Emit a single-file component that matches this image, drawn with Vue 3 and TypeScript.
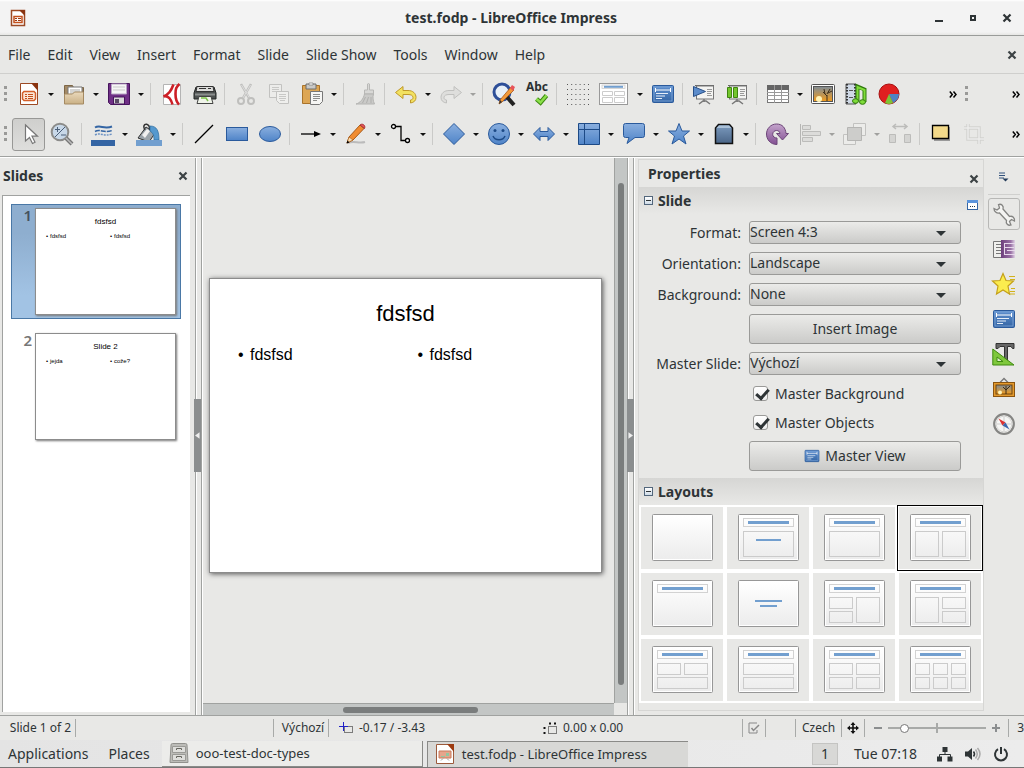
<script setup lang="ts">
import { ref } from 'vue'

interface Tool {
  icon?: string
  label?: string
  menu?: boolean
  disabled?: boolean
  active?: boolean
  wide?: string
}

const sep: Tool = {}

const menus = ['File', 'Edit', 'View', 'Insert', 'Format', 'Slide', 'Slide Show', 'Tools', 'Window', 'Help']

const standardTools: Tool[] = [
  { icon: 'newDoc', label: 'New', menu: true },
  { icon: 'open', label: 'Open', menu: true },
  { icon: 'save', label: 'Save', menu: true },
  sep,
  { icon: 'pdf', label: 'Export as PDF' },
  { icon: 'print', label: 'Print' },
  sep,
  { icon: 'cut', label: 'Cut', disabled: true },
  { icon: 'copy', label: 'Copy', disabled: true },
  { icon: 'paste', label: 'Paste', menu: true },
  sep,
  { icon: 'brush', label: 'Clone formatting', disabled: true },
  sep,
  { icon: 'undo', label: 'Undo', menu: true },
  { icon: 'redo', label: 'Redo', menu: true, disabled: true },
  sep,
  { icon: 'find', label: 'Find and replace' },
  { icon: 'spell', label: 'Spelling' },
  sep,
  { icon: 'grid', label: 'Display grid' },
  { icon: 'layout', label: 'Slide layout', menu: true, wide: 'wide-lg' },
  { icon: 'master', label: 'Master slide' },
  sep,
  { icon: 'present', label: 'Start from first slide' },
  { icon: 'presentHere', label: 'Start from current slide' },
  sep,
  { icon: 'table', label: 'Table', menu: true },
  { icon: 'image', label: 'Image' },
  { icon: 'media', label: 'Audio or video' },
  { icon: 'chart', label: 'Chart' }
]

const drawingTools: Tool[] = [
  { icon: 'pointer', label: 'Select', active: true },
  { icon: 'zoom', label: 'Zoom' },
  sep,
  { icon: 'lineColor', label: 'Line color', menu: true },
  { icon: 'fillColor', label: 'Fill color', menu: true, wide: 'wide-sm' },
  sep,
  { icon: 'line', label: 'Line' },
  { icon: 'rect', label: 'Rectangle' },
  { icon: 'ellipse', label: 'Ellipse' },
  sep,
  { icon: 'arrow', label: 'Lines and arrows', menu: true },
  { icon: 'pencil', label: 'Curve', menu: true },
  { icon: 'connector', label: 'Connector', menu: true },
  sep,
  { icon: 'diamond', label: 'Basic shapes', menu: true },
  { icon: 'smiley', label: 'Symbol shapes', menu: true },
  { icon: 'blockArrow', label: 'Block arrows', menu: true },
  { icon: 'flow', label: 'Flowchart', menu: true },
  { icon: 'callout', label: 'Callouts', menu: true },
  { icon: 'star', label: 'Stars', menu: true },
  { icon: 'cube', label: '3D objects', menu: true },
  sep,
  { icon: 'rotate', label: 'Rotate' },
  { icon: 'align', label: 'Align', menu: true, disabled: true },
  { icon: 'arrange', label: 'Arrange', menu: true, disabled: true },
  { icon: 'distribute', label: 'Distribute', disabled: true },
  sep,
  { icon: 'shadow', label: 'Shadow' },
  { icon: 'crop', label: 'Crop', disabled: true }
]

const docShape =
  '<path d="M3.500 1.500h17v21h-17z" fill="#fff" stroke="#9c4a24"/><path d="M14 1h7v8z" fill="#8a3410"/>'
const masterShape =
  '<rect x="1.500" y="3.500" width="21" height="17" rx="1" fill="url(#gDeep)" stroke="#2a5a9c"/><rect x="3" y="5" width="18" height="14" fill="none" stroke="#7fa8da" stroke-width=".8"/><path d="M4.500 6v4M19.500 6v4M4.500 8h15" stroke="#fff" fill="none"/><path d="M5 11.500h12M5 14h9M5 16.500h6" stroke="#e6eef8" fill="none"/>'
const screenShape =
  '<path d="M3 3.500h19" stroke="#666"/><rect x="4.500" y="4" width="17" height="13" fill="#f4f4f2" stroke="#777"/><path d="M15 7.500h5M15 9.500h5M15 11.500h4M15 13.500h5" stroke="#999"/><path d="M12 17v3M7 22l4-3h3l4 3" fill="none" stroke="#777" stroke-width="1.500"/>'

const icons: Record<string, string> = {
  newDoc: docShape + '<path d="M7 9.500h10l1.500 1.500v6L17 18.500H7L5.500 17v-6z" fill="#fbe6d6" stroke="#d4602a" stroke-width="1.500"/><path d="M8 12.500h2M11 12.500h5M8 14.500h2M11 14.500h5M8 16.500h2M11 16.500h5" stroke="#c4501c"/>',
  open: '<path d="M2.500 21V3.500h8l1 2h10V21z" fill="#a48a66" stroke="#7d6645"/><path d="M6 5h14v9H6z" fill="#fff" stroke="#777"/><path d="M8 7h10v5H8z" fill="#d4d4d2"/><path d="M2.500 12h8l2-2h9v12h-19z" fill="url(#gFolder)" stroke="#a58a62"/>',
  save: '<path d="M1.500 1.500h21v21h-19l-2-2z" fill="#6f2f86" stroke="#46145c"/><path d="M4.500 2h15v10h-15z" fill="#f6f6f6" stroke="#b9a5c4"/><path d="M6 5h12M6 8h12" stroke="#c9c9c9"/><path d="M6.500 15h11v7h-11z" fill="#d8d8d8" stroke="#46145c"/><path d="M8 17h4v4H8z" fill="#5a4a66"/>',
  pdf: '<path d="M3.500 2.500h17v20h-17z" fill="#fff" stroke="#b4b4b4"/><path d="M19.500 2C16 5 15.500 7 15.500 12s1 8 3.500 10.500" fill="none" stroke="#cc1f26" stroke-width="2.600"/><path d="M13.500 2.500C11 9 9 12 3.500 14.500c4-1 7 1 9 8" fill="none" stroke="#cc1f26" stroke-width="2.600"/>',
  print: '<path d="M3 5h18l2 6v6H1v-6z" fill="#4d5150" stroke="#232625"/><path d="M4 4.500h16l1 5H3z" fill="#dcdcda" stroke="#333"/><path d="M6 6.500h7M15 6.500h3" stroke="#333"/><path d="M2 12.500h20" stroke="#8b8e8d" stroke-width="2"/><path d="M6 14.500h12l2 7H4z" fill="#f0f4ea" stroke="#444"/><path d="M8 16h5l2 3" stroke="#7cc24a" stroke-width="1.500" fill="none"/>',
  cut: '<path d="M7 2l8 14M17 2L9 16" stroke="#bfbfbd" stroke-width="2.500"/><path d="M7.500 3l8 13M16.500 3L9 16" stroke="#dedede"/><circle cx="7" cy="19" r="3" fill="none" stroke="#bfbfbd" stroke-width="2"/><circle cx="17" cy="19" r="3" fill="none" stroke="#bfbfbd" stroke-width="2"/>',
  copy: '<path d="M2.500 2.500h12v13h-12z" fill="#ececea" stroke="#c2c2c0"/><path d="M5 5.500h7M5 7.500h7M5 9.500h5" stroke="#c8c8c6"/><path d="M9.500 9.500h12v12h-9l-3-3z" fill="#efefed" stroke="#c2c2c0"/><path d="M12 12.500h7M12 14.500h7M12 16.500h7M13 18.500h5" stroke="#c8c8c6"/>',
  paste: '<path d="M2.500 3.500h17v18h-17z" fill="#dda654" stroke="#a9732a"/><path d="M6 2h10v5H6z" fill="#c9c9c7" stroke="#6f6f6d"/><path d="M9 1h4v2H9z" fill="#fff" stroke="#777" stroke-width=".7"/><path d="M10.500 9.500h12v10l-3 3h-9z" fill="#f6f6f4" stroke="#777"/><path d="M13 12.500h7M13 14.500h7M13 16.500h7M13 18.500h4" stroke="#8c8c8a"/>',
  brush: '<path d="M14.500 2q1-1 2 0v6h4v4h-9V8h3z" fill="#d8d8d6" stroke="#b8b8b6"/><path d="M11.500 12h9c-1 3-.5 7 1 10H3c4-1 7.500-5 8.500-10z" fill="#cacac8" stroke="#b4b4b2"/><path d="M12.500 15l-3 6M15.500 15l-2 6M18 15v6" stroke="#b0b0ae"/>',
  undo: '<path d="M9 4.500v4h5c5 0 8 3 8 7 0 3-2 5-5.500 5.500v-3c2-.5 2.500-1 2.500-2.500 0-2-2-3-5-3H9v4L1.500 10.500z" fill="#f2e160" stroke="#c0992a"/>',
  redo: '<path d="M15 4.500v4h-5c-5 0-8 3-8 7 0 3 2 5 5.500 5.500v-3C5.500 17.500 5 17 5 15.500c0-2 2-3 5-3h5v4l7.500-6z" fill="#dededc" stroke="#c0c0be"/>',
  find: '<circle cx="10" cy="10" r="8" fill="#e8f0f8" stroke="#2e4f98" stroke-width="3"/><path d="M15 15l7 8" stroke="#222" stroke-width="4"/><path d="M7 22l1-4L19 5l3 3-12 12z" fill="#f39a3a" stroke="#a85a18" stroke-width=".8"/><path d="M18 6l2-3 3 2-2 4z" fill="#e8545a"/><path d="M7 22l1-4 2 2z" fill="#333"/>',
  spell: '<text x="12" y="9" text-anchor="middle" font-family="Noto Sans, sans-serif" font-size="12" font-weight="700" fill="#2b3133">Abc</text><path d="M11.500 17l4 3.500 6-7" fill="none" stroke="#3d8a10" stroke-width="4.500"/><path d="M11.500 17l4 3.500 6-7" fill="none" stroke="#8be04a" stroke-width="2.500"/>',
  grid: [0, 1, 2, 3, 4].map(r => `<path d="M1 ${2.5 + r * 5}h22" stroke="#555" stroke-dasharray="1 3.200"/>`).join(''),
  layout: '<rect x="-2.500" y="1.500" width="28" height="21" fill="#fff" stroke="#999"/><rect x="0" y="3" width="23" height="3.500" fill="#f8f8f8" stroke="#ccc" stroke-width=".8"/><path d="M2 4.800h19" stroke="#729fcf" stroke-width="2"/><path d="M.5 9.500h10v4H.5zM12.500 9.500h10v4h-10zM.5 15.500h10v5H.5zM12.500 15.500h10v5h-10z" fill="none" stroke="#ccc"/>',
  master: masterShape,
  present: screenShape + '<path d="M1.500 4.500v10l12-5z" fill="#5c8ccb" stroke="#274f87"/>',
  presentHere: screenShape + '<path d="M2.500 5.500h4v10h-4zM8.500 5.500h4v10h-4z" fill="#73c62c" stroke="#3f8410"/>',
  table: '<rect x="1.500" y="3.500" width="21" height="17" fill="#fff" stroke="#777"/><path d="M1 3h22v5H1z" fill="#666"/><path d="M1 10.500h22M1 13.500h22M1 17.500h22M8.500 3v18M15.500 3v18" stroke="#999" fill="none"/>',
  image: '<rect x=".5" y="2.500" width="23" height="19" rx="1" fill="#fff" stroke="#555"/><rect x="2.500" y="4.500" width="19" height="15" fill="url(#gSun)" stroke="#555"/><circle cx="8" cy="17" r="3" fill="#fff3b8"/><path d="M16 19v-6M16 14l-4-4M16 12l3-5M14 12l-1-5M17 11l4-2" stroke="#3b2c1a" fill="none"/>',
  media: '<path d="M2 2h10v20H2z" fill="#cfd9e6" stroke="#555"/><path d="M3 2v20M11 2v20" stroke="#333" stroke-width="2" stroke-dasharray="1.500 1.500"/><path d="M5 8.500h4M5 15.500h4" stroke="#555"/><path d="M13.500 19V4.500l7 3V20" fill="none" stroke="#2f7a0c" stroke-width="4"/><path d="M13.500 19V5l7 3v12" fill="none" stroke="#7fdc3a" stroke-width="2"/><ellipse cx="11.500" cy="19" rx="3" ry="2.300" fill="#7fdc3a" stroke="#2f7a0c"/><ellipse cx="18.500" cy="20" rx="3" ry="2.300" fill="#7fdc3a" stroke="#2f7a0c"/>',
  chart: '<circle cx="12" cy="12" r="10" fill="#e02020" stroke="#a80f0f"/><path d="M12 12h10a10 10 0 0 1-6 9z" fill="#4f83c4"/><path d="M12 12l-4 9c2.500 1.200 5.500 1.200 8 0z" fill="#7fc436"/>',
  pointer: '<path d="M8.500 3v16l4-3.500 3 6 2.500-1.300-3-6h5.500z" fill="#fff" stroke="#777" stroke-width="1.200"/>',
  zoom: '<circle cx="10" cy="10" r="8.300" fill="#c8d8e8" stroke="#8c8c8a" stroke-width="2"/><path d="M16 16l6 6" stroke="#777" stroke-width="4"/><path d="M16 16l6 6" stroke="#bbb" stroke-width="1.500"/><path d="M5 15L15 5M5 7.500h5M7.500 5v5M11 13h5" stroke="#4b5f78" fill="none"/>',
  lineColor: '<path d="M4 5.500c5-3 9 2 17-1" stroke="#3465a4" stroke-width="2" fill="none"/><path d="M4 9.500c5-3 9 2 17-1" stroke="#3465a4" stroke-width="1.500" stroke-dasharray="5 1" fill="none"/><path d="M4 13c5-3 9 2 17-1" stroke="#6d93c4" stroke-dasharray="2 1" fill="none" stroke-width="1.500"/><rect x="0" y="18" width="24" height="6" fill="#3465a4"/>',
  fillColor: '<path d="M1 16L9 5l9 6-6 9z" fill="#9aa3aa" stroke="#333"/><path d="M5 13l5-6 3 2-5 7z" fill="#f0f0f0"/><path d="M8 8c-3-5 1-8 4-4l1 4" fill="none" stroke="#333" stroke-width="1.500"/><path d="M13 4c7 0 9 5 9 14h-5c0-5-1-7-4-9z" fill="#5599cf" stroke="#2a6a9e" stroke-width=".7"/><rect x="-1" y="18" width="26" height="6" fill="#729fcf"/>',
  line: '<path d="M3 21L21 3" stroke="#000" stroke-width="1.200"/>',
  rect: '<rect x="1.500" y="5.500" width="21" height="13" fill="url(#gBlue)" stroke="#2a5a9c"/>',
  ellipse: '<ellipse cx="12" cy="12" rx="10.500" ry="7.500" fill="url(#gBlue)" stroke="#2a5a9c"/>',
  arrow: '<path d="M2 12h14" stroke="#000" stroke-width="1.300"/><path d="M15 9l7 3-7 3z"/>',
  pencil: '<path d="M4 21c6-3 10 1 17-1" stroke="#bbb" stroke-width="2" fill="none"/><path d="M3 21l2-6L16 3l4 3.500L9 18z" fill="#f08c30" stroke="#a85a18"/><path d="M16 3c2-2 6 0 4.500 3.500z" fill="#e8545a" stroke="#a33"/><path d="M3 21l2-6 4 3z" fill="#f8dcae" stroke="#a85a18" stroke-width=".6"/><path d="M2.500 21.500l1-3 2 2z"/>',
  connector: '<path d="M6 4.500h6v14h5" fill="none" stroke="#000" stroke-width="1.300"/><circle cx="4.500" cy="4.500" r="2" fill="#fff" stroke="#000" stroke-width="1.300"/><circle cx="18.500" cy="18.500" r="2" fill="#fff" stroke="#000" stroke-width="1.300"/>',
  diamond: '<path d="M12 1.500L22.500 12 12 22.500 1.500 12z" fill="url(#gBlue)" stroke="#2a5a9c"/>',
  smiley: '<circle cx="12" cy="12" r="10.500" fill="url(#gBlue)" stroke="#2a5a9c"/><circle cx="8" cy="8.500" r="1.500" fill="#1d4a86"/><circle cx="16" cy="8.500" r="1.500" fill="#1d4a86"/><path d="M6 14c2 5 10 5 12 0" fill="none" stroke="#1d4a86" stroke-width="1.500"/>',
  blockArrow: '<path d="M1.500 12l6.500-6.500v4h8v-4l6.500 6.500-6.500 6.500v-4H8v4z" fill="url(#gBlue)" stroke="#2a5a9c"/>',
  flow: '<path d="M1.500 1.500h21v21h-21z" fill="url(#gBlue)" stroke="#1d4a86"/><path d="M7.500 2v20M2 7.500h20" stroke="#1d4a86"/>',
  callout: '<path d="M3.500 1.500h17q2 0 2 2v10q0 2-2 2H13l-8 6 2-6H3.500q-2 0-2-2v-10q0-2 2-2z" fill="url(#gBlue)" stroke="#2a5a9c"/>',
  star: '<path d="M12 1.500l3 7.500h7.500l-6 5 2.500 8-7-5-7 5 2.500-8-6-5H9z" fill="url(#gBlue)" stroke="#2a5a9c"/>',
  cube: '<path d="M3.500 6l3-3.500h11l3 3.500v15.500h-17z" fill="url(#gSteel)" stroke="#111" stroke-width="1.500"/><path d="M4.500 6l2.500-2.500h10L19.500 6z" fill="#a9c0d8"/>',
  rotate: '<path d="M12 22.500C5 22.500 1.500 17 1.500 12S5.500 2 11.500 2s9 4 9.500 9.500h2.500L17.500 18l-6-6.500h3.500c-.5-2-1.500-3-3.500-3s-3.800 1.500-3.800 3.800S9.500 16 12 16z" fill="url(#gRotate)" stroke="#6c4578"/>',
  align: '<path d="M2.500 2v21" stroke="#b5b5b3"/><path d="M4.500 3.500h8v4h-8zM4.500 9.500h18v4h-18zM4.500 15.500h10v4h-10z" fill="#dcdcda" stroke="#bcbcba"/>',
  arrange: '<path d="M10.500 1.500h12v12h-12zM.5 12.500h12v10H.5z" fill="#ececea" stroke="#c2c2c0"/><path d="M4.500 5.500h14v13h-14z" fill="#cdcdcb" stroke="#b5b5b3"/>',
  distribute: '<path d="M5 4.500h14M8 2L5 4.500 8 7M16 2l3 2.500L16 7" fill="none" stroke="#bcbcba" stroke-width="1.500"/><path d="M1.500 12.500h6v8h-6zM16.500 12.500h6v8h-6z" fill="#d4d4d2" stroke="#bcbcba"/>',
  shadow: '<path d="M5 5h16v14H5z" fill="#999"/><path d="M3.500 3.500h16v13h-16z" fill="#f2d98a" stroke="#000" stroke-width="1.300"/>',
  crop: '<path d="M6 2v15h16M2 6h15v16" fill="none" stroke="#d2d2d0" stroke-width="3.500"/><path d="M6 2v15h16M2 6h15v16" fill="none" stroke="#ececea" stroke-width="1.500"/>',
  wrench: '<path d="M2 6.500l3 1.500 2.500-2L6.500 2.500c3-1 5.500 1.500 4.500 4.500l6.500 7.500c3-1 5.500 1.500 5 4.500l-3-1.500-2 2L19 23c-3 1-5.500-1.500-4.500-4.500L7.500 11C4.500 11.500 2 9.500 2 6.500z" fill="#f4f4f2" stroke="#848482" stroke-width="1.300"/>',
  transition: '<path d="M1.500 4.500h9v16h-9z" fill="#efefed" stroke="#777"/><path d="M4 7.500h5M4 10.500h5M4 13.500h5M4 16.500h5" stroke="#777"/><path d="M9 3h14v18H9z" fill="url(#gPurple)"/><path d="M12 6.500h11M13 10.500h9M15 13.500h8M12 17.500h11M12.500 6v12" stroke="#e8d8ec" fill="none"/>',
  animation: '<path d="M17 4.500h6M18 7.500h5M19 16.500h4M18 19.500h5M17 22h6" stroke="#d2b21c"/><path d="M11 1.500l3 7 7.500.5-5.500 5 1.500 8-6.500-4-6.500 4 1.500-8L.5 9 8 8.500z" fill="#fbec4e" stroke="#c4a01a" stroke-width="1.200"/>',
  styles: '<path d="M4 1.500h18v5h-1.500L19 4.500h-3.500V19l2 2h-7l2-2V4.500H8L6 6.500H4z" fill="#666" stroke="#333"/><path d="M.8 7v16H22z" fill="#7fc83c" stroke="#3f8a10"/><path d="M5 15v4.500h6z" fill="#dff0cc" stroke="#3f8a10"/>',
  gallery: '<path d="M8 5.500l4-4 4 4" fill="none" stroke="#777" stroke-width="1.300"/><rect x="1.500" y="5.500" width="21" height="14" fill="#e49a2c" stroke="#8a5410"/><rect x="4" y="8" width="16" height="9" fill="url(#gSun)" stroke="#6b4414"/><circle cx="8" cy="15.500" r="2" fill="#fff3b8"/><path d="M14 17v-4l-3-3M14 13l4-4M14 12V9" stroke="#3b2c1a" fill="none"/>',
  navigator: '<circle cx="12" cy="12" r="9.800" fill="#f6f6f4" stroke="#858583" stroke-width="2.200"/><circle cx="12" cy="12" r="7.800" fill="none" stroke="#d5d5d3"/><path d="M12 5v14M5 12h14" stroke="#ccc"/><path d="M6.500 6.500l7 4-3 3z" fill="#dd3333"/><path d="M17.500 17.500l-4-7-3 3z" fill="#3d68ae"/>'
}

const sideTabs = [
  { icon: 'wrench', label: 'Properties', active: true },
  { icon: 'transition', label: 'Slide Transition' },
  { icon: 'animation', label: 'Animation' },
  { icon: 'master', label: 'Master Slides' },
  { icon: 'styles', label: 'Styles' },
  { icon: 'gallery', label: 'Gallery' },
  { icon: 'navigator', label: 'Navigator' }
]

const slides = [
  { title: 'fdsfsd', left: 'fdsfsd', right: 'fdsfsd' },
  { title: 'Slide 2', left: 'jejda', right: 'cože?' }
]
const current = ref(0)

const format = ref('Screen 4:3')
const orientation = ref('Landscape')
const background = ref('None')
const masterSlide = ref('Výchozí')
const masterBackground = ref(true)
const masterObjects = ref(true)
const zoomLevel = ref(14)

// Each box is [x, y, width, height] on a 61x47 miniature.
type Box = [number, number, number, number]
interface Layout { name: string; title?: boolean; boxes: Box[]; bars?: Box[] }

const layouts: Layout[] = [
  { name: 'Blank', boxes: [] },
  { name: 'Title Slide', title: true, boxes: [[5, 17, 50, 25]], bars: [[18, 25, 25, 2]] },
  { name: 'Title, Content', title: true, boxes: [[5, 17, 50, 25]] },
  { name: 'Title and 2 Content', title: true, boxes: [[5, 17, 23, 25], [32, 17, 23, 25]] },
  { name: 'Title Only', title: true, boxes: [] },
  { name: 'Centered Text', boxes: [], bars: [[17, 20, 27, 2], [22, 25, 17, 2]] },
  { name: 'Title, 2 Content and Content', title: true, boxes: [[5, 17, 23, 11], [5, 31, 23, 11], [32, 17, 23, 25]] },
  { name: 'Title, Content and 2 Content', title: true, boxes: [[5, 17, 23, 25], [32, 17, 23, 11], [32, 31, 23, 11]] },
  { name: 'Title, 2 Content over Content', title: true, boxes: [[5, 17, 23, 11], [32, 17, 23, 11], [5, 31, 50, 11]] },
  { name: 'Title, Content over Content', title: true, boxes: [[5, 17, 50, 11], [5, 31, 50, 11]] },
  { name: 'Title, 4 Content', title: true, boxes: [[5, 17, 23, 11], [32, 17, 23, 11], [5, 31, 23, 11], [32, 31, 23, 11]] },
  { name: 'Title, 6 Content', title: true, boxes: [[5, 17, 14, 11], [23, 17, 14, 11], [41, 17, 14, 11], [5, 31, 14, 11], [23, 31, 14, 11], [41, 31, 14, 11]] }
]
const layout = ref(3)
</script>

<template>
  <div class="window">
    <svg class="defs" aria-hidden="true">
      <defs>
        <linearGradient id="gBlue" x1="0" y1="0" x2="0" y2="1"><stop offset="0" stop-color="#8aafdf" /><stop offset="1" stop-color="#4f84c8" /></linearGradient>
        <linearGradient id="gDeep" x1="0" y1="0" x2="0" y2="1"><stop offset="0" stop-color="#5f90cf" /><stop offset="1" stop-color="#3465a4" /></linearGradient>
        <linearGradient id="gSteel" x1="0" y1="0" x2="0" y2="1"><stop offset="0" stop-color="#7d9cc0" /><stop offset="1" stop-color="#4a6587" /></linearGradient>
        <linearGradient id="gFolder" x1="0" y1="0" x2="0" y2="1"><stop offset="0" stop-color="#ead9bc" /><stop offset="1" stop-color="#c9b085" /></linearGradient>
        <linearGradient id="gSun" x1="0" y1="0" x2="0" y2="1"><stop offset="0" stop-color="#7f8c96" /><stop offset="1" stop-color="#f39c1c" /></linearGradient>
        <linearGradient id="gPurple" x1="0" y1="0" x2="1" y2="0"><stop offset="0" stop-color="#6d3f7c" /><stop offset=".7" stop-color="#9a72a6" /><stop offset="1" stop-color="#e0d4e4" /></linearGradient>
        <linearGradient id="gRotate" x1="0" y1="0" x2="0" y2="1"><stop offset="0" stop-color="#c4a4cc" /><stop offset="1" stop-color="#824f92" /></linearGradient>
        <linearGradient id="gPaper" x1="0" y1="0" x2="0" y2="1"><stop offset="0" stop-color="#fff" /><stop offset="1" stop-color="#ececec" /></linearGradient>
      </defs>
    </svg>

    <header class="titlebar">
      <svg class="app-icon" viewBox="0 0 16 18" aria-hidden="true">
        <path d="M1.500 1.500h13v15h-13z" fill="#fff" stroke="#9c4a24" stroke-width="1.500" />
        <path d="M9 1h6v6z" fill="#8a3410" />
        <rect x="4" y="7.500" width="8" height="6" fill="#fff" stroke="#c4501c" stroke-width="1.500" />
        <path d="M5 9.500h2M8 9.500h3M5 11.500h2M8 11.500h3" stroke="#9c3a10" />
      </svg>
      <h1>test.fodp - LibreOffice Impress</h1>
      <div class="win-buttons">
        <button aria-label="Minimize"><svg viewBox="0 0 10 10"><path d="M1 8h8" stroke="#2e3436" stroke-width="2" /></svg></button>
        <button aria-label="Restore"><svg viewBox="0 0 10 10"><path d="M3 3h4v4H3z" fill="none" stroke="#2e3436" stroke-width="2" /></svg></button>
        <button aria-label="Close"><svg viewBox="0 0 10 10"><path d="M1.500 1.500l7 7M8.500 1.500l-7 7" stroke="#2e3436" stroke-width="2.200" /></svg></button>
      </div>
    </header>

    <nav class="menubar">
      <button v-for="m in menus" :key="m">{{ m }}</button>
      <button class="close doc-close" aria-label="Close document"><svg viewBox="0 0 10 10"><path d="M1.500 1.500l7 7M8.500 1.500l-7 7" stroke="#3c4244" stroke-width="2.200" /></svg></button>
    </nav>

    <div class="toolbars">
      <div class="toolbar" role="toolbar" aria-label="Standard">
        <span class="grip"></span>
        <template v-for="(t, i) in standardTools" :key="i">
          <span v-if="!t.icon" class="sep"></span>
          <template v-else>
            <button class="tool" :class="t.wide" :disabled="t.disabled" :aria-label="t.label"><svg viewBox="0 0 24 24" v-html="icons[t.icon]"></svg></button>
            <button v-if="t.menu" class="drop" :disabled="t.disabled" :aria-label="t.label + ' options'"></button>
          </template>
        </template>
        <div class="overflow">
          <button aria-label="More standard tools"><svg viewBox="0 0 8 7"><path d="M.8 .5l2.500 3-2.500 3M4.500 .5l2.500 3-2.500 3" fill="none" stroke="#000" stroke-width="1.500" /></svg></button>
          <span class="grip"></span>
          <button aria-label="More tools"><svg viewBox="0 0 8 7"><path d="M.8 .5l2.500 3-2.500 3M4.500 .5l2.500 3-2.500 3" fill="none" stroke="#000" stroke-width="1.500" /></svg></button>
        </div>
      </div>
      <div class="toolbar" role="toolbar" aria-label="Drawing">
        <span class="grip"></span>
        <template v-for="(t, i) in drawingTools" :key="i">
          <span v-if="!t.icon" class="sep"></span>
          <template v-else>
            <button class="tool" :class="[t.wide, { active: t.active }]" :disabled="t.disabled" :aria-label="t.label"><svg viewBox="0 0 24 24" v-html="icons[t.icon]"></svg></button>
            <button v-if="t.menu" class="drop" :disabled="t.disabled" :aria-label="t.label + ' options'"></button>
          </template>
        </template>
        <div class="overflow">
          <button aria-label="More drawing tools"><svg viewBox="0 0 8 7"><path d="M.8 .5l2.500 3-2.500 3M4.500 .5l2.500 3-2.500 3" fill="none" stroke="#000" stroke-width="1.500" /></svg></button>
        </div>
      </div>
    </div>

    <main class="workspace">
      <section class="slides-pane">
        <header>
          <h2>Slides</h2>
          <button class="close" aria-label="Close slides pane"><svg viewBox="0 0 10 10"><path d="M1.500 1.500l7 7M8.500 1.500l-7 7" stroke="#3c4244" stroke-width="2.200" /></svg></button>
        </header>
        <ol class="slide-list">
          <li v-for="(s, i) in slides" :key="i" :class="{ selected: i === current }" @click="current = i">
            <span class="num">{{ i + 1 }}</span>
            <article class="slide thumb">
              <h3>{{ s.title }}</h3>
              <div class="cols">
                <p><i>•</i>{{ s.left }}</p>
                <p><i>•</i>{{ s.right }}</p>
              </div>
            </article>
          </li>
        </ol>
      </section>

      <div class="splitter"><button aria-label="Hide slides pane"><svg viewBox="0 0 6 8"><path d="M5.500 0v8L0 4z" fill="#eee" /></svg></button></div>

      <section class="editor">
        <div class="canvas">
          <article class="slide big">
            <h3>{{ slides[current].title }}</h3>
            <div class="cols">
              <p><i>•</i>{{ slides[current].left }}</p>
              <p><i>•</i>{{ slides[current].right }}</p>
            </div>
          </article>
        </div>
        <div class="vscroll"><span></span></div>
        <div class="hscroll"><span></span></div>
        <div class="corner"></div>
      </section>

      <div class="splitter right"><button aria-label="Hide sidebar"><svg viewBox="0 0 6 8"><path d="M.5 0v8L6 4z" fill="#eee" /></svg></button></div>

      <aside class="sidebar">
        <div class="deck">
          <header class="deck-title">
            <h2>Properties</h2>
            <button class="close" aria-label="Close sidebar"><svg viewBox="0 0 10 10"><path d="M1.500 1.500l7 7M8.500 1.500l-7 7" stroke="#3c4244" stroke-width="2.200" /></svg></button>
          </header>
          <header class="panel-title">
            <button class="expander" aria-label="Collapse Slide"></button>
            <h3>Slide</h3>
            <button class="more" aria-label="More options"><svg viewBox="0 0 11 10"><rect x=".5" y=".5" width="10" height="9" fill="#fff" stroke="#3465a4" /><path d="M0 1.500h11" stroke="#5b94dc" stroke-width="3" /><path d="M3 6.500h1M5 6.500h1M7 6.500h1" stroke="#234" /></svg></button>
          </header>
          <form class="form" @submit.prevent>
            <label for="format">Format:</label>
            <div class="combo"><select id="format" v-model="format"><option>Screen 4:3</option><option>Screen 16:9</option></select></div>
            <label for="orientation">Orientation:</label>
            <div class="combo"><select id="orientation" v-model="orientation"><option>Landscape</option><option>Portrait</option></select></div>
            <label for="background">Background:</label>
            <div class="combo"><select id="background" v-model="background"><option>None</option><option>Color</option></select></div>
            <button type="button" class="push">Insert Image</button>
            <label for="master">Master Slide:</label>
            <div class="combo"><select id="master" v-model="masterSlide"><option>Výchozí</option></select></div>
            <label class="check"><input v-model="masterBackground" type="checkbox" />Master Background</label>
            <label class="check"><input v-model="masterObjects" type="checkbox" />Master Objects</label>
            <button type="button" class="push"><svg viewBox="1 3 22 18" aria-hidden="true" v-html="icons.master"></svg>Master View</button>
          </form>
          <header class="panel-title">
            <button class="expander" aria-label="Collapse Layouts"></button>
            <h3>Layouts</h3>
          </header>
          <div class="layouts">
            <button v-for="(l, i) in layouts" :key="l.name" :aria-label="l.name" :class="{ chosen: i === layout }" @click="layout = i">
              <svg viewBox="0 0 61 47">
                <rect x=".5" y=".5" width="60" height="46" rx="1" fill="#fff" stroke="#979797" />
                <rect x="2" y="2" width="57" height="43" fill="url(#gPaper)" />
                <template v-if="l.title">
                  <rect x="5.500" y="4.500" width="50" height="8" fill="none" stroke="#d2d2d2" />
                  <rect x="10" y="7" width="41" height="3" fill="#729fcf" />
                </template>
                <rect v-for="(b, k) in l.boxes" :key="k" :x="b[0] + 0.5" :y="b[1] + 0.5" :width="b[2]" :height="b[3]" fill="none" stroke="#cbcbcb" />
                <rect v-for="(b, k) in l.bars" :key="'b' + k" :x="b[0]" :y="b[1]" :width="b[2]" :height="b[3]" fill="#729fcf" />
              </svg>
            </button>
          </div>
        </div>
        <nav class="tabs">
          <button class="tab-menu" aria-label="Sidebar settings"><svg viewBox="0 0 10 10"><path d="M0 1h6M0 3.500h6M0 6h5" stroke="#33527c" /><path d="M3.500 6.500h6L6.500 9.500z" fill="#223a58" /></svg></button>
          <button v-for="t in sideTabs" :key="t.label" :class="{ active: t.active }" :aria-label="t.label"><svg viewBox="0 0 24 24" v-html="icons[t.icon]"></svg></button>
        </nav>
      </aside>
    </main>

    <footer class="statusbar">
      <span class="s-slide">Slide 1 of 2</span>
      <span class="s-info"></span>
      <span class="s-master">Výchozí</span>
      <span class="s-pos">
        <span class="coords"><svg viewBox="0 0 15 13" aria-hidden="true"><path d="M5.500 4.500h8v6h-8z" fill="none" stroke="#111" stroke-dasharray="1 1" /><path d="M4.500 0v9M0 4.500h9" stroke="#2222c8" /></svg>-0.17 / -3.43</span>
        <span class="size"><svg viewBox="0 0 15 13" aria-hidden="true"><path d="M5.500 4.500h8v7h-8z" fill="none" stroke="#111" stroke-dasharray="1 1" /><path d="M6 1.500h2M11 1.500h2M1.500 5v2M1.500 10v2" stroke="#111" stroke-width="2" /></svg>0.00 x 0.00</span>
      </span>
      <span class="s-icon"><svg viewBox="0 0 12 12" aria-hidden="true"><path d="M9 1H1v10h8V8" fill="none" stroke="#888" /><path d="M3.500 6l2 2.500L11 3" fill="none" stroke="#888" stroke-width="1.500" /></svg></span>
      <span class="s-blank"></span>
      <span class="s-lang">Czech</span>
      <span class="s-icon"><svg viewBox="0 0 12 12" aria-hidden="true"><path d="M6 1v10M1 6h10" stroke="#111" stroke-width="1.600" /><path d="M6 0l2.500 3h-5zM6 12L3.500 9h5zM0 6l3-2.500v5zM12 6L9 3.500v5z" fill="#111" /></svg></span>
      <span class="s-zoom">
        <button aria-label="Zoom out"><svg viewBox="0 0 8 8"><path d="M0 4h8" stroke="#8b8e8f" stroke-width="2" /></svg></button>
        <input v-model="zoomLevel" type="range" min="0" max="100" aria-label="Zoom" />
        <button aria-label="Zoom in"><svg viewBox="0 0 8 8"><path d="M0 4h8M4 0v8" stroke="#8b8e8f" stroke-width="2" /></svg></button>
      </span>
      <span class="s-percent">3</span>
    </footer>

    <footer class="taskbar">
      <button class="plain">Applications</button>
      <button class="plain">Places</button>
      <div class="tasks">
        <button class="task">
          <svg viewBox="0 0 20 20" aria-hidden="true"><path d="M2 2q0-1.500 1.500-1.500h13Q18 .5 18 2l1 17.500H1z" fill="#bcbcb8" stroke="#92928e" /><path d="M3.500 3.500h13v6h-13zM3.500 11.500h13v6h-13z" fill="#dededb" stroke="#9a9a96" /><path d="M7.500 7V5.500h5V7M7.500 15v-1.500h5V15" fill="none" stroke="#66665f" /></svg>
          ooo-test-doc-types
        </button>
        <button class="task current">
          <svg viewBox="0 0 20 20" aria-hidden="true"><path d="M1.500.5h17v19h-17z" fill="#fff" stroke="#9c5a3c" /><path d="M12 0h7v8z" fill="#9c3a10" /><path d="M4 7h12v7H4z" fill="#e6a58c" stroke="#c97a5c" /><path d="M6 12h4v1H6zM11 9h3v3h-3z" fill="#8fc7a0" /><path d="M8 14.500l-2 2M12 14.500l2 2" stroke="#999" /></svg>
          test.fodp - LibreOffice Impress
        </button>
      </div>
      <div class="tray">
        <button class="desk">1</button>
        <time>Tue 07:18</time>
        <svg viewBox="0 0 16 16" aria-label="Network" role="img"><path d="M5.500 1h5v5h-5zM0 10.500h5v5H0zM10.500 10.500h5v5h-5z" fill="#2e3436" /><path d="M8 5v4M2.500 11V8.500h11V11" fill="none" stroke="#2e3436" /></svg>
        <svg viewBox="0 0 16 16" aria-label="Volume" role="img"><path d="M0 5.500h3L7 2v12L3 10.500H0z" fill="#2e3436" /><path d="M8.500 5.500q2 2.500 0 5" fill="none" stroke="#2e3436" stroke-width="1.500" /><path d="M10.500 3.500q3.500 4.500 0 9M12.500 2q5 6 0 12" fill="none" stroke="#aaa" stroke-width="1.500" /></svg>
        <svg viewBox="0 0 16 16" aria-label="Power" role="img"><path d="M5 3.200a6 6 0 1 0 6 0M8 1v7" fill="none" stroke="#2e3436" stroke-width="2" /></svg>
      </div>
    </footer>
  </div>
</template>

<style>
body {
  margin: 0;
}
</style>

<style scoped>
.window {
  display: grid;
  grid-template-rows: auto auto auto 1fr auto auto;
  min-height: 100vh;
  overflow: hidden;
  background: #e8e8e6;
  color: #2e3436;
  font: 14px/20px 'Noto Sans', 'Open Sans', sans-serif;
}
.window * {
  box-sizing: border-box;
}
.defs {
  position: absolute;
  width: 0;
  height: 0;
}
button {
  padding: 0;
  border: 0;
  background: none;
  color: inherit;
  font: inherit;
}
h1, h2, h3, p, ol {
  margin: 0;
  padding: 0;
}
svg {
  overflow: visible;
  flex: none;
}

/* Title bar */
.titlebar {
  display: grid;
  grid-template-columns: 1fr auto 1fr;
  align-items: center;
  height: 36px;
  padding: 0 12px 0 10px;
  border-bottom: 1px solid #9a9c9a;
  background: linear-gradient(#fff, #f3f3f3 2px, #f3f3f3 32px, #e6e6e4);
}
.app-icon {
  width: 16px;
  height: 18px;
}
.titlebar h1 {
  font-size: 14px;
  font-weight: 700;
}
.win-buttons {
  display: flex;
  justify-content: flex-end;
  gap: 24px;
}
.win-buttons svg,
.close svg {
  display: block;
  width: 10px;
  height: 10px;
}

/* Menu bar */
.menubar {
  display: flex;
  align-items: center;
  gap: 17px;
  height: 38px;
  padding: 0 7px 0 8px;
  border-bottom: 1px solid #cfcfcd;
}
.doc-close {
  margin-left: auto;
}

/* Toolbars */
.toolbars {
  padding-bottom: 2px;
  border-bottom: 1px solid #a0a2a0;
  box-shadow: 0 1px #fff;
}
.toolbar {
  display: flex;
  align-items: center;
  height: 40px;
  padding-left: 4px;
}
.grip {
  width: 8px;
  height: 16px;
  background: repeating-linear-gradient(#9a9a98 0 3px, transparent 3px 6px) 0 0 / 3px 15px no-repeat;
}
.tool {
  display: flex;
  align-items: center;
  justify-content: center;
  flex: none;
  width: 33px;
  height: 33px;
}
.tool svg {
  width: 24px;
  height: 24px;
}
.wide-sm {
  width: 36px;
}
.wide-lg {
  width: 40px;
}
.tool.active {
  border: 1px solid #989896;
  border-radius: 3px;
  background: linear-gradient(#cfcfcd, #dededc);
}
.drop {
  display: flex;
  justify-content: center;
  flex: none;
  width: 12px;
}
.drop::before {
  content: '';
  border: 3px solid transparent;
  border-top-color: #111;
  border-bottom: 0;
}
.drop:disabled::before {
  border-top-color: #a0a09e;
}
.sep {
  flex: none;
  width: 8px;
  height: 22px;
  background: linear-gradient(#cacac8, #cacac8) 3px 0 / 1px 100% no-repeat;
}
.overflow {
  display: flex;
  align-items: center;
  margin-left: auto;
  padding-right: 4px;
}
.overflow svg {
  display: block;
  width: 8px;
  height: 7px;
}
.overflow .grip {
  margin: 0 39px 0 8px;
}

/* Workspace */
.workspace {
  display: grid;
  grid-template-columns: 194px 9px minmax(0, 1fr) 8px 389px;
  padding-top: 1px;
  border-bottom: 1px solid #a0a2a0;
}
.slides-pane {
  display: flex;
  flex-direction: column;
  padding: 0 4px 3px 2px;
}
.slides-pane header {
  display: flex;
  align-items: center;
  justify-content: space-between;
  height: 37px;
  padding: 0 2px 2px 1px;
}
.slides-pane h2,
.sidebar h2,
.sidebar h3 {
  font-size: 14px;
  font-weight: 700;
}
.slide-list {
  display: flex;
  flex: 1;
  flex-direction: column;
  gap: 10px;
  padding: 8px 9px 8px 8px;
  border: solid #a0a2a0;
  border-width: 1px 0 0 1px;
  background: #fff;
  list-style: none;
}
.slide-list li {
  display: flex;
  gap: 3px;
  padding: 3px;
  border: 1px solid transparent;
}
.slide-list li.selected {
  border-color: #4a78a6;
  background: linear-gradient(#8eaecf, #8eaecf 25%, #a2c3e4 80%);
}
.num {
  width: 17px;
  padding-left: 4px;
  color: #777;
  font-size: 15px;
  line-height: 14px;
  text-align: right;
  font-weight: 600;
}
.selected .num {
  color: #45525e;
}
.slide {
  background: #fff;
  border: 1px solid #8c8c8c;
  color: #000;
  font-family: 'Liberation Sans', Arial, sans-serif;
}
.slide h3 {
  font-weight: 400;
  text-align: center;
}
.slide .cols {
  display: flex;
}
.slide i {
  display: inline-block;
  font-style: normal;
}
.thumb {
  width: 141px;
  height: 107px;
  padding-top: 8px;
  box-shadow: 1px 1px 2px #777;
}
.thumb h3 {
  font-size: 8px;
  line-height: 10px;
}
.thumb .cols {
  padding: 4px 0 0 10px;
  font-size: 6px;
  line-height: 10px;
}
.thumb p {
  width: 64px;
}
.thumb i {
  width: 4px;
}
.splitter {
  display: flex;
  align-items: center;
  padding-bottom: 2px;
  border-right: 1px solid #fff;
  background: linear-gradient(90deg, transparent 1px, #a0a2a0 1px 2px, #fff 2px 3px, #e8e8e6 3px 7px, #a0a2a0 7px);
}
.splitter.right {
  background: linear-gradient(90deg, #a0a2a0 1px, #fff 1px 2px, #e8e8e6 2px 6px, #a0a2a0 6px);
}
.splitter button {
  display: flex;
  align-items: center;
  justify-content: center;
  width: 7px;
  height: 73px;
  background: #8b8e8f;
}
.splitter svg {
  width: 5px;
  height: 7px;
}

/* Editor */
.editor {
  display: grid;
  grid-template-columns: minmax(0, 1fr) 13px;
  grid-template-rows: minmax(0, 1fr) 12px;
}
.canvas {
  display: flex;
  align-items: center;
  padding: 0 12px 10px 6px;
}
.big {
  width: 100%;
  aspect-ratio: 4 / 3;
  padding-top: 20px;
  box-shadow: 1px 1px 5px #555;
}
.big h3 {
  font-size: 22px;
  line-height: 30px;
}
.big .cols {
  padding: 16px 4px 0 28px;
  font-size: 16px;
  line-height: 20px;
}
.big p {
  width: 50%;
}
.big i {
  width: 12px;
}
.vscroll {
  padding: 25px 3px 18px;
  border-left: 1px solid #a0a2a0;
  background: #c3c6c5;
}
.vscroll span {
  display: block;
  width: 6px;
  height: 100%;
  border-radius: 3px;
  background: #7a7d7d;
}
.hscroll {
  padding: 3px 0;
  border-top: 1px solid #a0a2a0;
  background: #c3c6c5;
}
.hscroll span {
  display: block;
  width: 33%;
  height: 6px;
  margin-left: 34%;
  border-radius: 3px;
  background: #7a7d7d;
}

/* Sidebar */
.sidebar {
  display: grid;
  grid-template-columns: minmax(0, 1fr) 40px;
  padding: 1px 0 4px 3px;
}
.deck {
  display: flex;
  flex-direction: column;
  border: 1px solid #d6d6d4;
}
.deck-title,
.panel-title {
  display: flex;
  align-items: center;
  height: 27px;
}
.deck-title {
  padding: 0 4px 0 9px;
}
.deck-title .close,
.more {
  align-self: flex-end;
  margin-left: auto;
  padding-bottom: 3px;
}
.panel-title {
  gap: 5px;
  padding: 0 5px;
  background: linear-gradient(#d6d6d4, #e8e8e6);
}
.expander {
  width: 9px;
  height: 9px;
  border: 1px solid #53677c;
  background: linear-gradient(#2e3436, #2e3436) center / 5px 1px no-repeat, linear-gradient(#fff, #cfdce8);
}
.panel-title .more {
  padding: 0 0 4px;
}
.more svg {
  display: block;
  width: 11px;
  height: 10px;
}
.form {
  display: grid;
  grid-template-columns: minmax(0, 1fr) 212px;
  align-items: center;
  gap: 8px;
  padding: 7px 22px 7px 0;
}
.form > label:not(.check) {
  text-align: right;
}
.combo {
  position: relative;
  height: 23px;
}
.combo::after {
  content: '';
  position: absolute;
  top: 10px;
  right: 15px;
  border: 5px solid transparent;
  border-top-color: #2e3436;
  border-bottom: 0;
  pointer-events: none;
}
.combo select {
  display: block;
  width: 100%;
  height: 100%;
  padding: 0 0 2px;
  appearance: none;
  color: inherit;
  font: inherit;
}
.combo select,
.push {
  border: 1px solid #9a9a98;
  border-radius: 3px;
  background: linear-gradient(#ebebe9, #cbcbc9);
}
.push {
  display: flex;
  align-items: center;
  justify-content: center;
  gap: 5px;
  grid-column: 2;
  height: 30px;
}
.push svg {
  width: 16px;
  height: 12px;
}
.check {
  display: flex;
  align-items: center;
  grid-column: 2;
  gap: 7px;
  height: 21px;
  padding-left: 4px;
}
.check input {
  width: 15px;
  height: 15px;
  margin: 0;
  appearance: none;
  border: 1px solid #9a9a98;
  border-radius: 3px;
  background: linear-gradient(#fff, #eee);
}
.check input:checked::before {
  content: '';
  display: block;
  width: 10px;
  height: 5px;
  margin: 2px 0 0 2px;
  border: solid #2e3436;
  border-width: 0 0 3px 3px;
  rotate: -48deg;
}
.layouts {
  display: grid;
  grid-template-columns: repeat(4, minmax(0, 1fr));
  background: #fff;
}
.layouts button {
  display: flex;
  align-items: center;
  justify-content: center;
  height: 66px;
  padding-bottom: 1px;
  border: 2px solid #fff;
  background: #e8e8e6;
}
.layouts button.chosen {
  outline: 1px solid #000;
  outline-offset: -1px;
}
.layouts svg {
  width: 61px;
  height: 47px;
}
.tabs {
  display: flex;
  flex-direction: column;
  align-items: center;
  gap: 3px;
}
.tabs button {
  display: flex;
  align-items: center;
  justify-content: center;
  width: 32px;
  height: 32px;
}
.tabs svg {
  width: 24px;
  height: 24px;
}
.tabs .tab-menu {
  height: 36px;
  border-bottom: 1px solid #d0d0ce;
}
.tabs .tab-menu svg {
  width: 10px;
  height: 10px;
}
.tabs .active {
  border: 1px solid #b8b8b6;
  border-radius: 3px;
}

/* Status bar */
.statusbar {
  display: flex;
  align-items: center;
  height: 24px;
  font-size: 12px;
  line-height: 18px;
}
.statusbar > span {
  display: flex;
  align-items: center;
  justify-content: center;
  flex: none;
  height: 18px;
  border-right: 1px solid #a8aaa8;
}
.statusbar .s-slide {
  width: 76px;
  padding-left: 6px;
}
.s-info {
  width: 198px;
}
.s-master {
  width: 55px;
  padding-left: 4px;
}
.statusbar .s-pos {
  flex: 1;
  justify-content: flex-start;
  padding-left: 10px;
}
.s-pos span {
  display: flex;
  align-items: center;
  gap: 5px;
}
.coords {
  width: 204px;
}
.s-pos svg {
  width: 15px;
  height: 13px;
}
.s-icon {
  width: 23px;
}
.s-icon svg {
  width: 12px;
  height: 12px;
}
.s-blank {
  width: 30px;
}
.s-lang {
  width: 46px;
}
.s-zoom {
  width: 144px;
  gap: 6px;
}
.s-zoom button,
.s-zoom button svg {
  display: block;
  width: 8px;
  height: 8px;
}
.s-zoom input {
  width: 98px;
  height: 12px;
  margin: 0;
  appearance: none;
  background:
    linear-gradient(#a8aaa8, #a8aaa8) 48px 1px / 2px 10px no-repeat,
    linear-gradient(#a8aaa8, #a8aaa8) 0 5px / 100% 2px no-repeat;
}
.s-zoom input::-webkit-slider-thumb {
  width: 9px;
  height: 9px;
  appearance: none;
  border: 1px solid #777;
  border-radius: 50%;
  background: #fff;
}
.statusbar .s-percent {
  justify-content: flex-end;
  width: 15px;
  border: 0;
}

/* Desktop panel */
.taskbar {
  display: flex;
  align-items: center;
  height: 28px;
  padding-left: 8px;
  border-bottom: 1px solid #777;
  background: linear-gradient(90deg, #e4e4e4, #ececec);
}
.plain {
  margin-right: 20px;
}
.plain + .plain {
  margin-right: 12px;
}
.tasks {
  display: flex;
  flex: 1;
  gap: 4px;
}
.task {
  display: flex;
  align-items: center;
  gap: 7px;
  flex: 0 1 261px;
  height: 26px;
  padding-left: 7px;
  border: solid #8a8a88;
  border-width: 0 1px 1px 0;
  background: #ececea;
  font-size: 13px;
  white-space: nowrap;
}
.task svg {
  width: 20px;
  height: 20px;
}
.task.current {
  border-width: 1px 0 0 1px;
  background: #d8d8d6;
}
.tray {
  display: flex;
  align-items: center;
  gap: 12px;
  padding-right: 15px;
}
.tray svg {
  width: 16px;
  height: 16px;
}
.tray time {
  margin: 0 8px 0 4px;
}
.desk {
  width: 26px;
  height: 22px;
  border: 1px solid #c4c4c2;
  background: #d8d8d6;
}
</style>
